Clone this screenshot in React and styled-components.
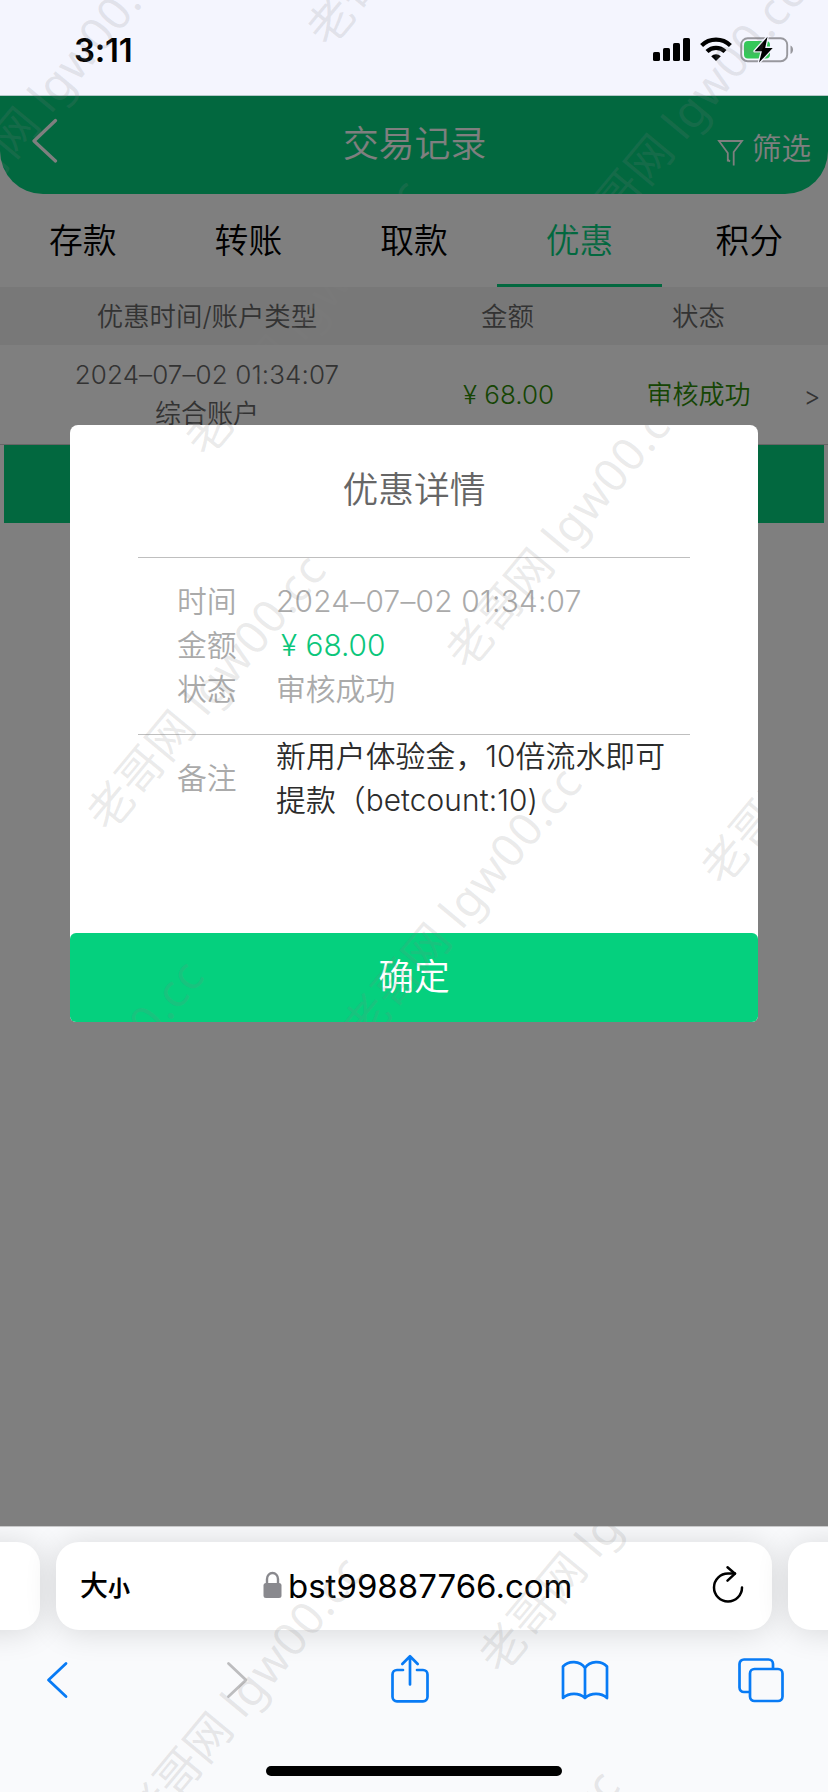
import React from "react";
import styled, { createGlobalStyle } from "styled-components";

const GREEN = "#05d17e";

const GlobalStyle = createGlobalStyle`
  * { box-sizing: border-box; }
  body { margin: 0; background: #fff; }
`;

const Screen = styled.div`
  position: relative;
  width: 828px;
  height: 1792px;
  overflow: hidden;
  display: flex;
  flex-direction: column;
  font-family: Inter, "Noto Sans CJK SC", sans-serif;
  font-weight: 350;
  color: #000;
`;

/* ---------- status bar ---------- */
const StatusBar = styled.header`
  height: 96px;
  flex: none;
  padding: 0 33px 0 74px;
  display: flex;
  justify-content: space-between;
  background: #f4f5fe;
  border-bottom: 1px solid #b5c9c9;
`;
const Clock = styled.span`
  padding-top: 30px;
  font-size: 33px;
  line-height: 40px;
  font-weight: 600;
  letter-spacing: -0.2px;
`;
const StatusIcons = styled.div`
  padding-top: 36px;
  display: flex;
`;

/* ---------- page ---------- */
const Page = styled.main`
  position: relative;
  height: 1430px;
  flex: none;
  background: #fff;
`;
const TitleBar = styled.div`
  height: 98px;
  padding: 0 17px 0 32px;
  display: grid;
  grid-template-columns: 311px 1fr auto;
  background: ${GREEN};
  border-radius: 0 0 43px 43px;
  color: #fff;
`;
const BackArrow = styled.div`
  padding-top: 22px;
`;
const PageTitle = styled.h1`
  margin: 0;
  font-size: 35.8px;
  line-height: 97px;
  font-weight: 350;
`;
const Filter = styled.div`
  padding-top: 30px;
  display: flex;
  gap: 8px;
  font-size: 29.5px;
  line-height: 44px;
  svg { margin-top: 13px; }
`;
const Tabs = styled.nav`
  height: 93px;
  display: grid;
  grid-template-columns: repeat(5, 1fr);
`;
const Tab = styled.div`
  height: 93px;
  padding-left: ${(p) => p.$shift || 0}px;
  border-bottom: 3px solid ${(p) => (p.$active ? GREEN : "transparent")};
  color: ${(p) => (p.$active ? GREEN : "#000")};
  font-size: 33.8px;
  line-height: 93px;
  text-align: center;
`;
const columns = "414px 187px 195px 1fr";
const TableHead = styled.div`
  height: 58px;
  display: grid;
  grid-template-columns: ${columns};
  background: #f0f0f0;
  color: #666;
  font-size: 26.4px;
  line-height: 58px;
  text-align: center;
`;
const TableRow = styled.div`
  height: 100px;
  display: grid;
  grid-template-columns: ${columns};
  align-items: center;
  border-bottom: 1px solid #ccc;
  color: #666;
  font-size: 26px;
  line-height: 39px;
  text-align: center;
`;
const RowTime = styled.div`
  padding-bottom: 1px;
  span { letter-spacing: 0.1px; }
`;
const RowGood = styled.div`
  padding-left: ${(p) => p.$shift || 0}px;
  color: #2c8a06;
`;
const RowMore = styled.div`
  padding-top: 3px;
`;
const LoadBar = styled.div`
  height: 78px;
  margin: 0 4px;
  background: ${GREEN};
`;

/* ---------- dialog ---------- */
const Overlay = styled.div`
  position: absolute;
  inset: 0;
  padding-top: 329px;
  display: flex;
  justify-content: center;
  align-items: flex-start;
  background: rgba(0, 0, 0, 0.5);
`;
const Dialog = styled.section`
  width: 688px;
  height: 597px;
  display: flex;
  flex-direction: column;
  overflow: hidden;
  background: #fff;
  border-radius: 8px 8px 6px 6px;
`;
const DialogTitle = styled.h2`
  height: 133px;
  margin: 0 68px;
  border-bottom: 1px solid #bfbfbf;
  color: #666;
  font-size: 35.8px;
  line-height: 131px;
  font-weight: 350;
  text-align: center;
`;
const Details = styled.div`
  height: 177px;
  margin: 0 68px;
  padding: 21px 0 0 39px;
  border-bottom: 1px solid #bfbfbf;
`;
const Detail = styled.div`
  display: grid;
  grid-template-columns: 99px 1fr;
  color: #aaa;
  font-size: 29.8px;
  line-height: 44px;
`;
const Value = styled.div`
  padding-left: ${(p) => p.$inset || 0}px;
  color: ${(p) => p.$color || "inherit"};
  letter-spacing: ${(p) => p.$spacing || 0}px;
  white-space: nowrap;
`;
const Remark = styled(Detail)`
  height: 199px;
  margin-top: -1px;
  padding: 0 0 0 107px;
  align-items: center;
  align-content: start;
`;
const Confirm = styled.button`
  height: 89px;
  border: 0;
  padding: 0;
  border-radius: 6px 6px 0 0;
  background: #05d07e;
  color: #fff;
  font: inherit;
  font-size: 35.8px;
  line-height: 85px;
`;

/* ---------- browser chrome ---------- */
const BrowserBar = styled.footer`
  height: 266px;
  flex: none;
  padding-top: 15px;
  display: flex;
  flex-direction: column;
  align-items: center;
  overflow: hidden;
  border-top: 1px solid #c9c9ca;
  background: #f9fafc;
`;
const Pills = styled.div`
  width: 1012px;
  height: 88px;
  display: flex;
  gap: 16px;
  justify-content: center;
  flex: none;
`;
const Pill = styled.div`
  width: ${(p) => p.$width}px;
  flex: none;
  display: flex;
  border-radius: 23px;
  background: #fff;
  box-shadow: 0 2px 32px rgba(0, 0, 0, 0.14);
`;
const TextSize = styled.span`
  width: 180px;
  padding-left: 24px;
  font-weight: 500;
  font-size: 28px;
  line-height: 88px;
  small { font-size: 22px; font-weight: 700; }
`;
const Address = styled.div`
  flex: 1;
  padding-left: 27px;
  display: flex;
  gap: 6px;
  font-size: 33px;
  line-height: 88px;
  font-weight: 400;
  svg { margin-top: 29px; flex: none; }
`;
const Reload = styled.div`
  padding: 23px 28px 0 0;
`;
const Toolbar = styled.div`
  width: 828px;
  height: 60px;
  margin-top: 20px;
  padding-left: 45px;
  display: flex;
  align-items: flex-start;
`;
const Tool = styled.div`
  margin-left: ${(p) => p.$gap}px;
  height: 60px;
  svg { display: block; }
`;
const HomeIndicator = styled.div`
  width: 296px;
  height: 10px;
  margin-top: 56px;
  border-radius: 5px;
  background: #000;
`;

/* ---------- watermark layer ---------- */
const WatermarkLayer = styled.div`
  position: absolute;
  inset: 0;
  overflow: hidden;
  pointer-events: none;
`;
const Watermark = styled.span`
  position: absolute;
  left: ${(p) => p.$x - 23}px;
  top: ${(p) => p.$y - 30}px;
  transform-origin: 23px 30px;
  transform: rotate(-50.2deg);
  font: 400 46px/60px "Noto Sans", "Noto Sans CJK SC", sans-serif;
  color: rgba(128, 128, 128, 0.16);
  white-space: nowrap;
  span { letter-spacing: 0.8px; }
`;
const marks = [
  [-45, 202], [330, 20], [589, 229], [208, 430], [469, 643], [110, 805],
  [724, 859], [366, 1018], [-12, 1211], [502, 1647], [148, 1807], [404, 2021],
];

const Signal = () => (
  <svg width="37" height="26" viewBox="0 0 37 26">
    <rect x="0" y="16" width="7" height="9" rx="1.6" />
    <rect x="10" y="12" width="7" height="13" rx="1.6" />
    <rect x="20" y="7" width="7" height="18" rx="1.6" />
    <rect x="30" y="2" width="7" height="23" rx="1.6" />
  </svg>
);
const WifiIcon = styled.svg`
  margin-left: 9.5px;
`;
const Wifi = () => (
  <WifiIcon width="32" height="26" viewBox="0 0 32 26" fill="none" stroke="#000" strokeWidth="4.2">
    <path d="M1.6 9.4a20.6 20.6 0 0 1 28.8 0" />
    <path d="M7 15.6a12.8 12.8 0 0 1 18 0" />
    <path d="M11.2 20.2a6.8 6.8 0 0 1 9.6 0L16 25z" fill="#000" stroke="none" />
  </WifiIcon>
);
const BatteryIcon = styled.svg`
  margin-left: 8.5px;
`;
const Battery = () => (
  <BatteryIcon width="55" height="28" viewBox="0 0 55 28">
    <rect x="1.2" y="2.2" width="46" height="23" rx="6.5" fill="none" stroke="#98989e" strokeWidth="1.9" />
    <path d="M50.5 9.5c3.4 1.4 3.4 7 0 8.4z" fill="#98989e" />
    <rect x="4" y="5" width="26" height="17.6" rx="4" fill="#35c759" />
    <path d="M27.5.7 14.6 15.2h7.3L19 26.6 32.7 11.9h-7.5z" fill="#000" stroke="#f4f5fe" strokeWidth="2.6" paintOrder="stroke" strokeLinejoin="round" />
  </BatteryIcon>
);

export default function App() {
  return (
    <Screen>
      <GlobalStyle />
      <StatusBar>
        <Clock>3:11</Clock>
        <StatusIcons>
          <Signal />
          <Wifi />
          <Battery />
        </StatusIcons>
      </StatusBar>

      <Page>
        <TitleBar>
          <BackArrow>
            <svg width="26" height="46" viewBox="0 0 26 46" fill="none" stroke="#fff" strokeWidth="3.2" strokeLinecap="round" strokeLinejoin="round">
              <path d="M23.5 2.5 2 23l21.5 20" />
            </svg>
          </BackArrow>
          <PageTitle>交易记录</PageTitle>
          <Filter>
            <svg width="27" height="28" viewBox="0 0 27 28" fill="none" stroke="#fff" strokeWidth="1.8">
              <path d="M10.8 22.5V14L2 2h23l-8.3 11v13.5" />
              <path d="M10.5 20.5l2.5 2" />
            </svg>
            筛选
          </Filter>
        </TitleBar>
        <Tabs>
          <Tab>存款</Tab>
          <Tab>转账</Tab>
          <Tab>取款</Tab>
          <Tab $active>优惠</Tab>
          <Tab $shift={8}>积分</Tab>
        </Tabs>
        <TableHead>
          <span>优惠时间/账户类型</span>
          <span>金额</span>
          <span>状态</span>
        </TableHead>
        <TableRow>
          <RowTime>
            <span>2024–07–02 01:34:07</span>
            <br />
            综合账户
          </RowTime>
          <RowGood $shift={2}>¥ 68.00</RowGood>
          <RowGood>审核成功</RowGood>
          <RowMore>&gt;</RowMore>
        </TableRow>
        <LoadBar />

        <Overlay>
          <Dialog>
            <DialogTitle>优惠详情</DialogTitle>
            <Details>
              <Detail>
                <span>时间</span>
                <Value $spacing={0.25}>2024–07–02 01:34:07</Value>
              </Detail>
              <Detail>
                <span>金额</span>
                <Value $color="#0cc67b" $inset={5}>¥ 68.00</Value>
              </Detail>
              <Detail>
                <span>状态</span>
                <Value>审核成功</Value>
              </Detail>
            </Details>
            <Remark>
              <span>备注</span>
              <Value $color="#2c2c2c" $spacing={0.1}>
                新用户体验金，10倍流水即可
                <br />
                提款（betcount:10)
              </Value>
            </Remark>
            <Confirm>确定</Confirm>
          </Dialog>
        </Overlay>
      </Page>

      <BrowserBar>
        <Pills>
          <Pill $width={132} />
          <Pill $width={716}>
            <TextSize>
              大<small>小</small>
            </TextSize>
            <Address>
              <svg width="19" height="28" viewBox="0 0 19 28">
                <rect x="0.5" y="12" width="18" height="15" rx="2.5" fill="#89898e" />
                <path d="M4 13V8a5.5 6 0 0 1 11 0v5" fill="none" stroke="#89898e" strokeWidth="2.4" />
              </svg>
              bst99887766.com
            </Address>
            <Reload>
              <svg width="32" height="38" viewBox="0 0 32 38" fill="none" stroke="#000" strokeWidth="2.5" strokeLinecap="round" strokeLinejoin="round">
                <path d="M30 22.5A14 14 0 1 1 16 8.5h7" />
                <path d="M15.5 2.2 23 8.7l-7.5 7" />
              </svg>
            </Reload>
          </Pill>
          <Pill $width={132} />
        </Pills>
        <Toolbar>
          <Tool $gap={0}>
            <svg width="24" height="60" viewBox="0 0 24 60" fill="none" stroke="#087bf5" strokeWidth="2.8" strokeLinecap="round" strokeLinejoin="round">
              <path d="M21 13.5 3.5 30 21 46.5" />
            </svg>
          </Tool>
          <Tool $gap={157}>
            <svg width="24" height="60" viewBox="0 0 24 60" fill="none" stroke="#bdbdbf" strokeWidth="2.8" strokeLinecap="round" strokeLinejoin="round">
              <path d="M2.5 13.5 20 30 2.5 46.5" />
            </svg>
          </Tool>
          <Tool $gap={140}>
            <svg width="40" height="60" viewBox="0 0 40 60" fill="none" stroke="#087bf5" strokeWidth="2.7" strokeLinecap="round" strokeLinejoin="round">
              <path d="M13 20H7a4.5 4.5 0 0 0-4.5 4.5v22.3A4.5 4.5 0 0 0 7 51.3h26a4.5 4.5 0 0 0 4.5-4.5V24.5A4.5 4.5 0 0 0 33 20h-6" />
              <path d="M20 34.5V6.5M12.3 14 20 6.3l7.7 7.7" />
            </svg>
          </Tool>
          <Tool $gap={130}>
            <svg width="50" height="60" viewBox="0 0 50 60" fill="none" stroke="#087bf5" strokeWidth="2.7" strokeLinecap="round" strokeLinejoin="round">
              <path d="M25 18C20 10.5 8.5 10.5 3 16.5v31.5c6-5.5 16-5.5 22 0 6-5.5 16-5.5 22 0V16.5C41.5 10.5 30 10.5 25 18zM25 18v30" />
            </svg>
          </Tool>
          <Tool $gap={127}>
            <svg width="48" height="60" viewBox="0 0 48 60" fill="none" stroke="#087bf5" strokeWidth="2.7" strokeLinejoin="round">
              <path d="M12 42H7a4.5 4.5 0 0 1-4.5-4.5V14A4.5 4.5 0 0 1 7 9.5h24.5A4.5 4.5 0 0 1 36 14v5" />
              <rect x="13" y="19" width="32.5" height="32" rx="4.5" />
            </svg>
          </Tool>
        </Toolbar>
        <HomeIndicator />
      </BrowserBar>

      <WatermarkLayer aria-hidden="true">
        {marks.map(([x, y]) => (
          <Watermark key={`${x}-${y}`} $x={x} $y={y}>
            老哥网<span> lgw00.cc</span>
          </Watermark>
        ))}
      </WatermarkLayer>
    </Screen>
  );
}
